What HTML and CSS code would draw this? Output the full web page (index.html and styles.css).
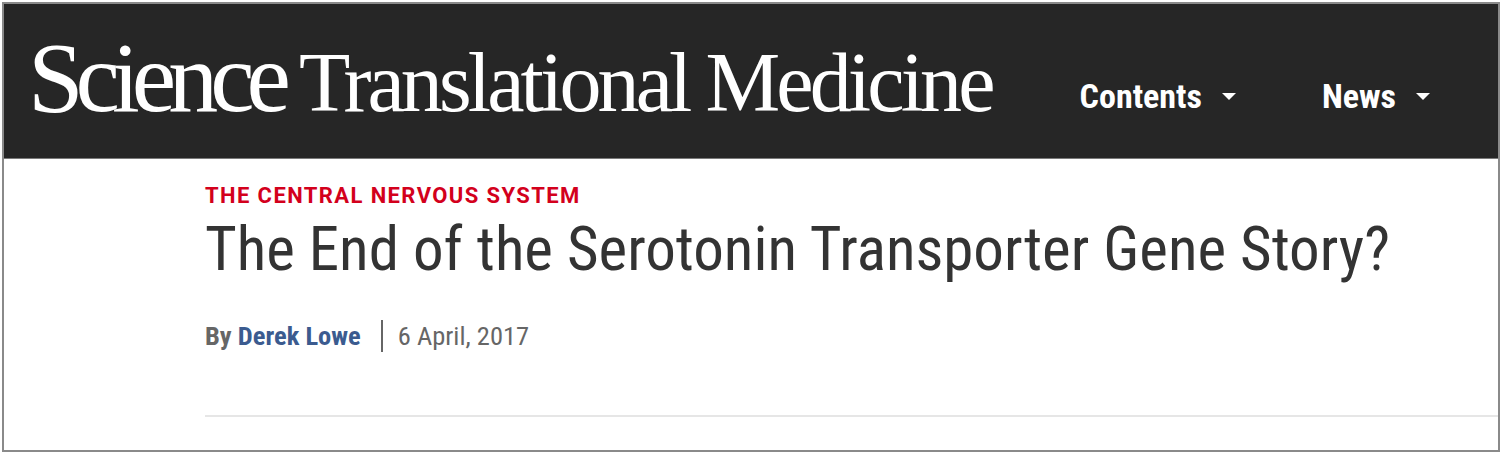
FILE: index.html
```html
<!DOCTYPE html>
<html lang="en">
<head>
<meta charset="utf-8">
<title>The End of the Serotonin Transporter Gene Story?</title>
<link rel="stylesheet" href="styles.css">
</head>
<body>
<div class="frame">
  <header class="masthead">
    <div class="logo"><span class="logo-science">Science</span><span class="logo-rest">Translational Medicine</span></div>
    <nav class="nav">
      <div class="nav-item"><span class="nav-label">Contents</span><span class="caret"></span></div>
      <div class="nav-item"><span class="nav-label">News</span><span class="caret"></span></div>
    </nav>
  </header>
  <main class="article">
    <div class="kicker">THE CENTRAL NERVOUS SYSTEM</div>
    <h1 class="title">The End of the Serotonin Transporter Gene Story?</h1>
    <div class="byline">
      <span class="by">By <a class="author" href="#">Derek Lowe</a></span>
      <span class="divider"></span>
      <span class="date">6 April, 2017</span>
    </div>
    <div class="rule"></div>
  </main>
</div>
</body>
</html>
```
FILE: styles.css
```css
* { box-sizing: border-box; }
html, body { margin: 0; padding: 0; background: #fff; }
body { font-family: Roboto, "Noto Sans", sans-serif; }

.frame {
  margin: 2px 0 2px 2px;
  height: 450px;
  border: 2px solid #8a8a8a;
  overflow: hidden;
}

.masthead {
  margin: -2px -2px 0 -2px;
  height: 157px;
  background: #262626;
  border-top: 2px solid #111;
  border-left: 2px solid #111;
  border-right: 2px solid #1a1a1a;
  border-bottom: 1px solid #7a7a7a;
  display: flex;
  align-items: flex-start;
}

.logo {
  margin: 24px 0 0 24px;
  font-family: "Liberation Serif", "DejaVu Serif", serif;
  color: #fff;
  white-space: nowrap;
  line-height: 100px;
}
.logo-science { font-size: 100px; letter-spacing: -8px; }
.logo-rest { font-size: 84px; letter-spacing: -3.9px; margin-left: 16px; }

.nav { display: flex; margin: 72px 0 0 auto; padding-right: 68px; gap: 86px; }
.nav-item { display: flex; align-items: center; color: #fff; }
.nav-label { font-size: 34px; line-height: 40px; font-weight: 700; font-stretch: 80%; }
.caret {
  width: 0; height: 0;
  margin-left: 20px;
  border-left: 7px solid transparent;
  border-right: 7px solid transparent;
  border-top: 7px solid #fff;
}

.article { padding: 24px 0 0 201px; }
.kicker {
  font-size: 22px; line-height: 25px; font-weight: 700;
  color: #d3001c; letter-spacing: 1.4px;
}
.title {
  margin: 6px 0 0;
  font-size: 61px; line-height: 70px; font-weight: 400;
  color: #333; font-stretch: 80%;
  white-space: nowrap;
}
.byline {
  margin-top: 36px;
  display: flex; align-items: center;
  font-size: 26.5px; line-height: 32px; font-stretch: 80%;
  color: #666;
}
.by { font-weight: 700; }
.author { color: #3b5b8f; text-decoration: none; }
.divider { width: 2px; height: 32px; background: #666; margin: 0 15px 0 20px; }
.rule { margin-top: 63px; height: 2px; background: #e6e6e6; }
```
